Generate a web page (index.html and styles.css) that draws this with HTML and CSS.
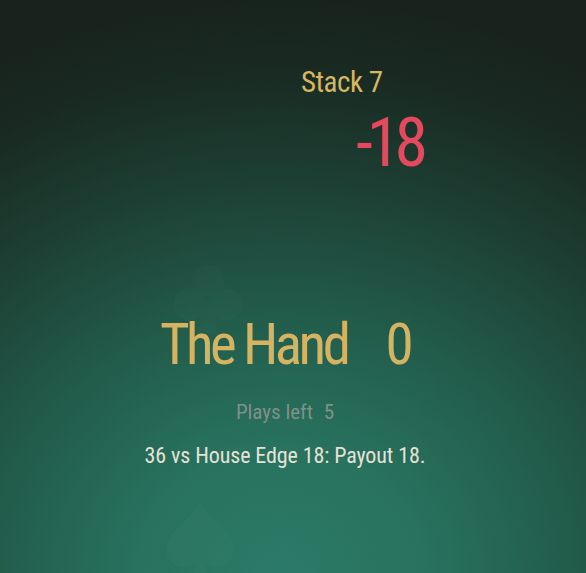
FILE: index.html
```html
<!DOCTYPE html>
<html lang="en">
<head>
<meta charset="utf-8">
<title>The Hand</title>
<link rel="stylesheet" href="styles.css">
</head>
<body>
<main class="table">
  <svg class="suit suit-club" viewBox="0 0 100 100" aria-hidden="true">
    <circle cx="50" cy="28" r="20"/>
    <circle cx="27" cy="58" r="20"/>
    <circle cx="73" cy="58" r="20"/>
    <path d="M44 55 L56 55 L62 96 L38 96 Z"/>
  </svg>
  <svg class="suit suit-spade" viewBox="0 0 100 100" aria-hidden="true">
    <path d="M50 4 C38 24 8 40 8 62 C8 78 22 86 34 84 C40 83 44 80 46 76 L40 98 L60 98 L54 76 C56 80 60 83 66 84 C78 86 92 78 92 62 C92 40 62 24 50 4 Z"/>
  </svg>
  <section class="stack">
    <div class="stack-label">Stack 7</div>
    <div class="stack-delta">-18</div>
  </section>
  <section class="hand">
    <h1 class="hand-title"><span>The Hand</span><span class="hand-score">0</span></h1>
    <p class="plays">Plays left <span class="plays-count">5</span></p>
    <p class="result">36 vs House Edge 18: Payout 18.</p>
  </section>
</main>
</body>
</html>
```

FILE: styles.css
```css
html, body {
  margin: 0;
  padding: 0;
  height: 100%;
}
body {
  background: radial-gradient(ellipse 110% 100% at 48% 100%, #2b7a67 0%, #28725f 22%, #225c4b 45%, #1d4034 68%, #192a22 88%, #18231e 100%);
  background-color: #18231e;
  font-family: "Roboto Condensed", "Liberation Sans Narrow", "DejaVu Sans Condensed", sans-serif;
  overflow: hidden;
}
.table {
  position: relative;
  height: 573px;
  display: flex;
  flex-direction: column;
}
.suit {
  position: absolute;
  fill: #ffffff;
  opacity: 0.012;
}
.suit-club {
  left: 168px;
  top: 258px;
  width: 80px;
  height: 80px;
}
.suit-spade {
  left: 160px;
  top: 500px;
  width: 80px;
  height: 80px;
}
.stack {
  padding-top: 66px;
  padding-left: 301px;
  display: flex;
  flex-direction: column;
}
.stack-label {
  color: #d8b662;
  font-size: 29px;
  line-height: 32px;
  letter-spacing: -0.5px;
}
.stack-delta {
  color: #e6485e;
  font-size: 68px;
  line-height: 68px;
  margin-top: 11px;
  margin-left: 55px;
  letter-spacing: -6px;
}
.hand {
  margin-top: 137px;
  display: flex;
  flex-direction: column;
  align-items: center;
  padding-right: 16px;
}
.hand-title {
  margin: 0;
  font-weight: normal;
  color: #d6b360;
  font-size: 57px;
  line-height: 62px;
  display: flex;
  gap: 38px;
  letter-spacing: -3.5px;
}
.plays {
  margin: 24px 0 0;
  color: #7f9288;
  font-size: 21px;
  line-height: 24px;
}
.plays-count {
  margin-left: 6px;
}
.result {
  margin: 19px 0 0;
  color: #e6e2d5;
  font-size: 22px;
  line-height: 26px;
  letter-spacing: -0.1px;
}
```
